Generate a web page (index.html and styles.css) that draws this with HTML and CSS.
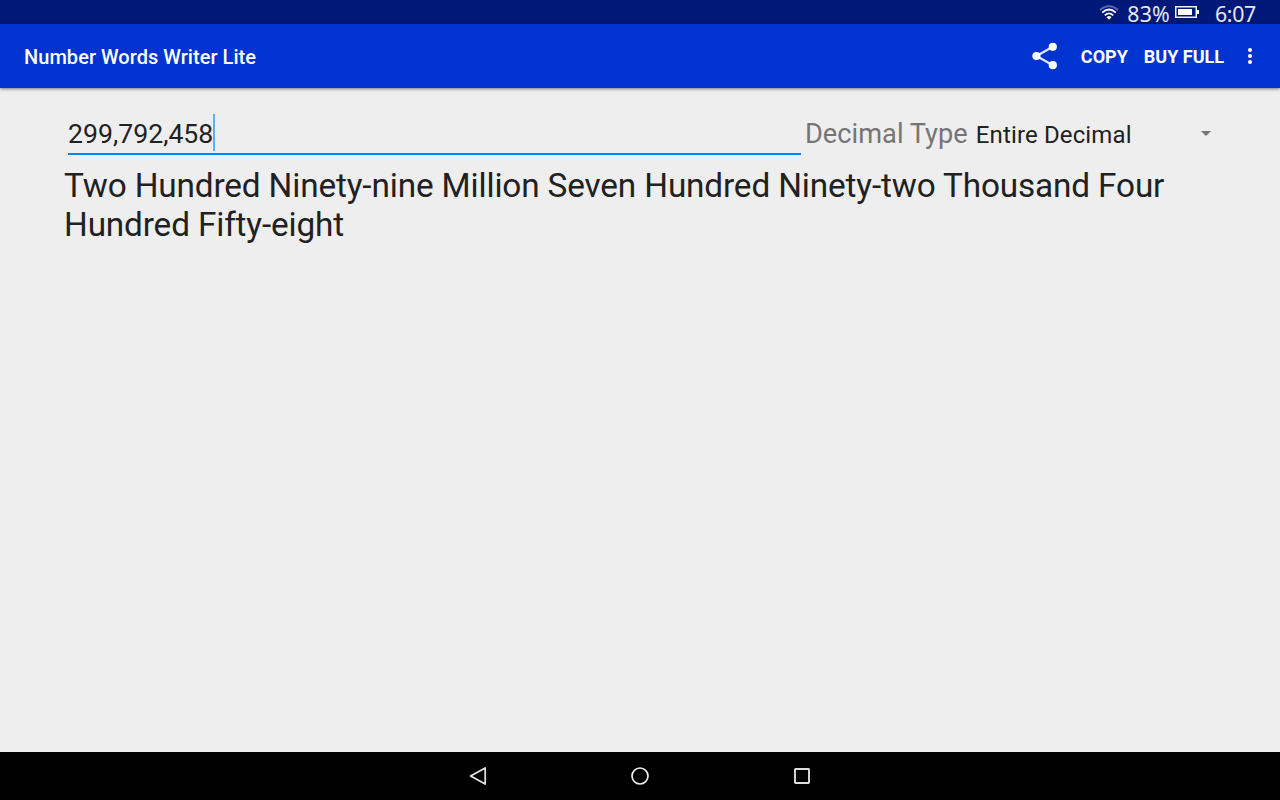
FILE: index.html
```html
<!DOCTYPE html>
<html lang="en">
<head>
  <meta charset="UTF-8">
  <title>Number Words Writer Lite</title>
  <link rel="stylesheet" href="styles.css">
</head>
<body>

  <div class="status-bar">
    <svg class="wifi" width="20" height="16" viewBox="0 0 20 16">
      <g fill="none" stroke="#fff" stroke-width="1.7">
        <path d="M1 5 Q10 -2.6 19 5" opacity="0.35" />
        <path d="M3.2 7.6 Q10 1.4 16.8 7.6" />
        <path d="M5.8 10.3 Q10 6.4 14.2 10.3" />
      </g>
      <path d="M7.5 12.2 Q10 10 12.5 12.2 L10 14.8 Z" fill="#fff" />
    </svg>
    <span class="percent">83%</span>
    <svg class="battery" width="24" height="12" viewBox="0 0 24 12">
      <rect x="0.75" y="0.75" width="20.5" height="10.5" fill="none" stroke="#f0f1f7" stroke-width="1.5" />
      <rect x="3" y="3" width="14" height="6" fill="#fff" />
      <rect x="22" y="4" width="2" height="4" fill="#fff" />
    </svg>
    <span class="clock">6:07</span>
  </div>

  <header class="action-bar">
    <h1>Number Words Writer Lite</h1>
    <svg class="share" width="26" height="28" viewBox="0 0 26 28">
      <path d="M20.8 4.8 L4.5 14 L20.8 23.2" fill="none" stroke="#dfe6fa" stroke-width="2.2" />
      <circle cx="20.8" cy="4.8" r="4.1" fill="#fff" />
      <circle cx="4.4" cy="14" r="4.1" fill="#fff" />
      <circle cx="20.8" cy="23.2" r="4.1" fill="#fff" />
    </svg>
    <span class="action copy">COPY</span>
    <span class="action buy">BUY FULL</span>
    <svg class="more" width="4" height="16" viewBox="0 0 4 16">
      <circle cx="2" cy="2" r="2" fill="#fff" />
      <circle cx="2" cy="8" r="2" fill="#fff" />
      <circle cx="2" cy="14" r="2" fill="#fff" />
    </svg>
  </header>

  <main>
    <div class="input-row">
      <div class="number-field">
        <span>299,792,458</span><span class="caret"></span>
      </div>
      <span class="type-label">Decimal Type</span>
      <div class="spinner">
        <span>Entire Decimal</span>
        <svg class="arrow" width="10" height="5" viewBox="0 0 10 5">
          <path d="M0 0 H10 L5 5 Z" fill="#757575" />
        </svg>
      </div>
    </div>
    <p class="words">Two Hundred Ninety-nine Million Seven Hundred Ninety-two Thousand Four Hundred Fifty-eight</p>
  </main>

  <nav class="nav-bar">
    <svg width="20" height="20" viewBox="0 0 20 20">
      <path d="M17.2 1.9 V18.1 L2.6 10 Z" fill="none" stroke="#e6e6e6" stroke-width="1.7" stroke-linejoin="round" />
    </svg>
    <svg width="20" height="20" viewBox="0 0 20 20">
      <circle cx="10" cy="10" r="8" fill="none" stroke="#eee" stroke-width="1.7" />
    </svg>
    <svg width="20" height="20" viewBox="0 0 20 20">
      <rect x="3" y="3" width="14" height="14" rx="0.5" fill="none" stroke="#ddd" stroke-width="1.9" />
    </svg>
  </nav>

</body>
</html>
```
FILE: styles.css
```css
body {
  margin: 0;
  height: 800px;
  display: flex;
  flex-direction: column;
  overflow: hidden;
  background-color: #eee;
  color: #212121;
  font-family: Roboto, sans-serif;
}

svg {
  display: block;
  flex: none;
}

.status-bar {
  height: 24px;
  display: flex;
  align-items: center;
  justify-content: flex-end;
  padding-right: 24px;
  background-color: #001878;
  color: #e6e8f2;
  font-family: "Noto Sans", sans-serif;
  font-size: 21.3px;
  line-height: 24px;
}

.wifi {
  margin-top: 1px;
}

.percent {
  margin: 4px 5px 0 8px;
  letter-spacing: 0.2px;
}

.battery {
  margin-right: 16px;
}

.clock {
  margin-top: 4px;
  letter-spacing: -0.3px;
}

.action-bar {
  height: 64px;
  display: flex;
  align-items: center;
  padding: 0 28px 0 24px;
  background-color: #0033cf;
  color: white;
  box-shadow: 0 1px 3px rgba(0, 0, 0, 0.5);
}

.action-bar h1 {
  margin: 2px auto 0 0;
  font-size: 20px;
  font-weight: 500;
  letter-spacing: 0.04px;
}

.action {
  font-size: 18px;
  font-weight: bold;
}

.copy {
  margin-left: 23px;
}

.buy {
  margin-left: 16px;
}

.more {
  margin-left: 24px;
}

main {
  flex: 1;
  padding: 21px 64px 0;
}

.input-row {
  display: flex;
  height: 57px;
}

.number-field {
  box-sizing: border-box;
  width: 733px;
  height: 46px;
  margin: 0 4px;
  padding-top: 5px;
  display: flex;
  align-items: center;
  border-bottom: 2px solid #0288ef;
  font-size: 26.67px;
  line-height: 32px;
}

.caret {
  width: 2px;
  height: 37px;
  margin-bottom: 3px;
  background-color: #5eb0f2;
}

.type-label {
  margin-top: 9px;
  color: #757575;
  font-size: 27.2px;
  line-height: 32px;
  letter-spacing: 0.03px;
}

.spinner {
  flex: 1;
  height: 32px;
  margin-top: 10px;
  padding: 0 5px 0 8px;
  display: flex;
  align-items: center;
  justify-content: space-between;
  font-size: 24px;
  letter-spacing: 0.14px;
}

.arrow {
  margin-bottom: 3px;
}

.words {
  margin: 0;
  font-size: 33.33px;
  line-height: 39px;
  letter-spacing: -0.145px;
}

.nav-bar {
  height: 48px;
  display: flex;
  align-items: center;
  justify-content: center;
  gap: 142px;
  background-color: black;
}
```
